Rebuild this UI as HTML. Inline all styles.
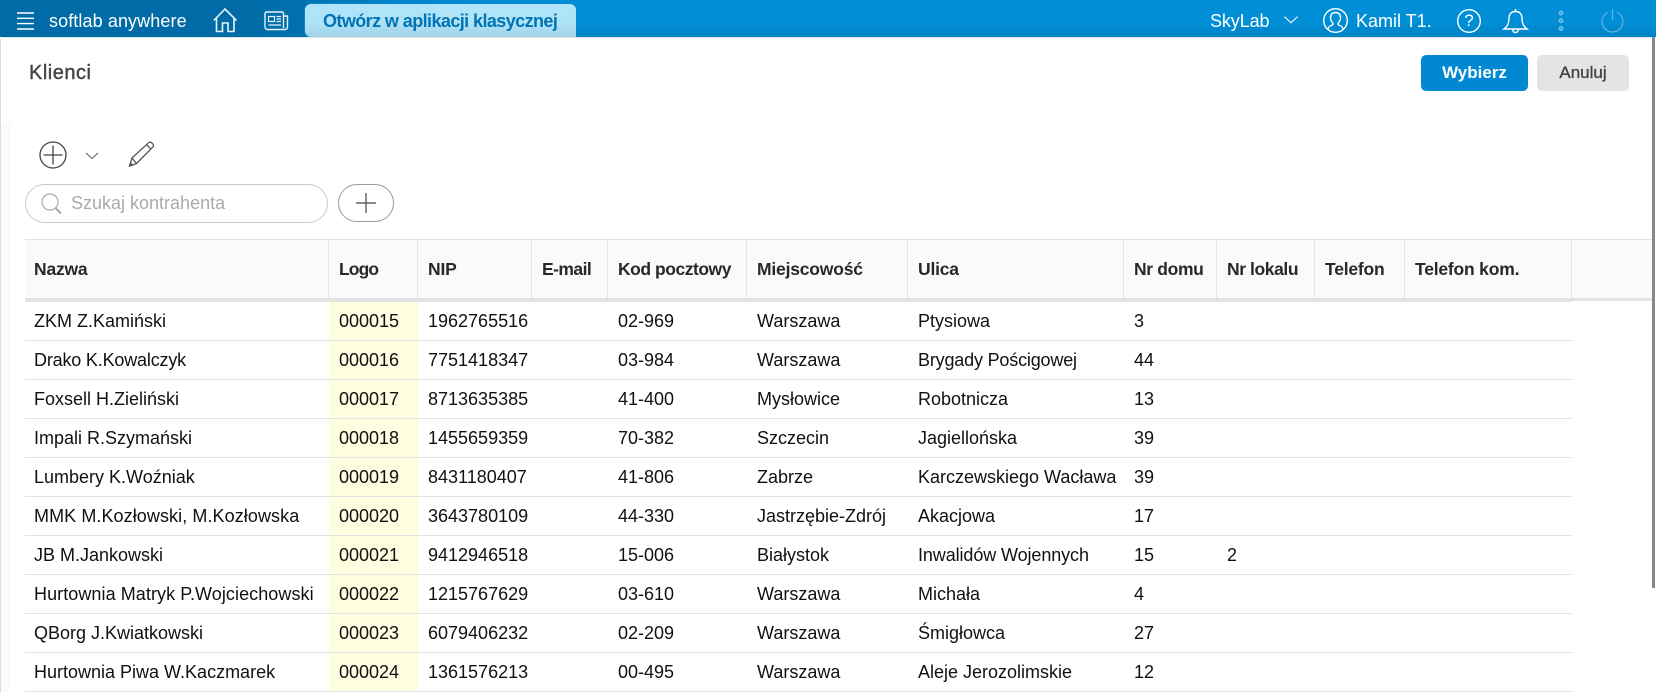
<!DOCTYPE html>
<html lang="pl"><head><meta charset="utf-8"><title>Klienci</title>
<style>
html,body{margin:0;padding:0;width:1656px;height:692px;overflow:hidden;background:#fff;font-family:"Liberation Sans",sans-serif;}
.a{position:absolute;white-space:nowrap}
#bar{left:0;top:0;width:1656px;height:37px;background:linear-gradient(90deg,#006ba6 0,#006ba6 235px,#0070ae 300px,rgba(0,125,195,.5) 400px,rgba(0,143,215,0) 520px),linear-gradient(180deg,#008fd6 0,#008fd6 22px,#0082c6 37px);}
#card{left:0;top:37px;width:1652px;height:655px;background:#fff;border-top:1px solid #e2e2e2;border-left:1px solid #dcdcdc;border-radius:4px 0 0 0;box-sizing:border-box}
#shade{left:1px;top:122px;width:30px;height:570px;background:#fbfbfb}
#panel{left:10px;top:122px;width:1642px;height:570px;background:#fff;border-radius:8px 0 0 0}
#tab{left:305px;top:4px;width:271px;height:33px;background:linear-gradient(180deg,#afe4fa 0,#aee2f7 60%,#a0d2e6 100%);border-radius:6px 6px 0 6px;box-shadow:0 -1px 0 #0a83c8,-1px 0 0 #0a83c8;color:#0274b4;font-size:18px;font-weight:bold;line-height:34px;padding-left:18px;box-sizing:border-box;letter-spacing:-.58px}
.w{color:#fff;font-size:18px;line-height:24px}
.btn{top:55px;height:36px;line-height:36px;text-align:center;font-size:17px;font-weight:bold;border-radius:5px}
table{position:absolute;left:25px;top:239px;border-collapse:separate;border-spacing:0;table-layout:fixed;width:1547px}
th{height:58px;padding:0 0 0 10px;box-sizing:content-box;background:#fafafa;border-top:1px solid #e4e4e4;border-right:1px solid #e4e4e4;border-bottom:4px solid #e3e3e3;text-align:left;font-size:17.5px;font-weight:bold;color:#26282c;white-space:nowrap;overflow:hidden;letter-spacing:-.2px}
td{height:38px;padding:0 0 0 10px;border-bottom:1px solid #e3e3e3;font-size:18px;color:#111;white-space:nowrap;overflow:hidden}
th:first-child,td:first-child{padding-left:9px}
td.y{background:#fdfde0}
svg{position:absolute;overflow:visible;fill:none}
</style></head><body>
<div class="a" id="bar"></div>
<div class="a" id="card"></div>
<div class="a" id="shade"></div>
<div class="a" id="panel"></div>

<svg style="left:17px;top:12px" width="18" height="18" stroke="#fff" stroke-width="1.4"><path d="M0 1h17M0 6.300h17M0 11.600h17M0 17h17"/></svg>
<div class="a w" style="left:49px;top:9px;font-size:18px;letter-spacing:.1px">softlab anywhere</div>
<svg style="left:213px;top:8px" width="25" height="25" stroke="#e8f3f9" stroke-width="1.6"><path d="M0.8 12.500 12 1l11.500 11.500M3.500 10.500V23.500h6V15h5.500v8.500h6V10.500"/></svg>
<svg style="left:264px;top:11px" width="25" height="20" stroke="#e8f3f9" stroke-width="1.4"><path d="M19.500 17V2.500a1.500 1.500 0 0 0-1.500-1.500H2.500A1.500 1.500 0 0 0 1 2.500v13.500a2.500 2.500 0 0 0 2.500 2.500H21a2.500 2.500 0 0 0 2.500-2.500V5h-4"/><path d="M4.500 5.500h6v5h-6zM12.500 5.500h4.500M12.500 8h4.500M12.500 10.500h4.500M4.500 14h12.500" stroke-width="1.200"/></svg>
<div class="a" id="tab">Otwórz w aplikacji klasycznej</div>

<div class="a w" style="left:1210px;top:9px;letter-spacing:-.1px">SkyLab</div>
<svg style="left:1284px;top:16px" width="14" height="8" stroke="#fff" stroke-width="1.1"><path d="M.5.700 7 6.800 13.500.700"/></svg>
<svg style="left:1323px;top:8px" width="25" height="25" stroke="#fff" stroke-width="1.4"><circle cx="12.500" cy="12.500" r="11.800"/><path d="M5 22c0-3 1.500-4.200 4.500-5 .6-.5.6-1.500.2-2-1.400-1.500-2.200-3.500-2.200-5.500 0-3 2-5 5-5s5 2 5 5c0 2-.8 4-2.200 5.500-.4.500-.4 1.500.2 2 3 .8 4.500 2 4.500 5"/></svg>
<div class="a w" style="left:1356px;top:9px">Kamil T1.</div>
<svg style="left:1457px;top:9px" width="24" height="24" stroke="#fff" stroke-width="1.4"><circle cx="12" cy="12" r="11.300"/></svg>
<div class="a" style="left:1457px;top:9px;width:24px;text-align:center;color:#fff;font-size:17px;line-height:24px">?</div>
<svg style="left:1503px;top:8px" width="26" height="26" stroke="#fff" stroke-width="1.4"><path d="M12.500 3.500V1M12.500 3.500c-4.500 0-6.500 3-6.500 7 0 5-1.500 8-5 10.500h23c-3.500-2.500-5-5.500-5-10.500 0-4-2-7-6.500-7zM9.500 21.500c.4 2 1.500 3 3 3s2.600-1 3-3"/></svg>
<svg style="left:1557px;top:9px" width="8" height="24" stroke="#79bee6" stroke-width="1.600"><circle cx="4" cy="4" r="1.600"/><circle cx="4" cy="11.700" r="1.600"/><circle cx="4" cy="19.500" r="1.600"/></svg>
<svg style="left:1601px;top:9px" width="23" height="23" stroke="#5cb0e2" stroke-width="1.300"><path d="M7 3.200a10.400 10.400 0 1 0 9 0M11.500 0v11"/></svg>

<div class="a" style="left:29px;top:61px;font-size:20px;line-height:25px;color:#444;letter-spacing:.5px;-webkit-text-stroke:.4px #444">Klienci</div>
<div class="a btn" style="left:1421px;width:107px;background:#0089d2;color:#fff">Wybierz</div>
<div class="a btn" style="left:1537px;width:92px;background:#e4e4e4;color:#444;font-weight:normal;-webkit-text-stroke:.35px #444">Anuluj</div>

<svg style="left:39px;top:141px" width="28" height="28" stroke="#444" stroke-width="1.300"><circle cx="14" cy="14" r="13"/><path d="M14 4.500v19M4.500 14h19"/></svg>
<svg style="left:85px;top:152px" width="14" height="8" stroke="#555" stroke-width="1"><path d="M1 1 7 6.500 13 1"/></svg>
<svg style="left:128px;top:141px" width="27" height="27" stroke="#555" stroke-width="1.300"><path d="M1.500 25 4 17 20.500 1.800c1-.9 2.200-.9 3.100 0l1.200 1.200c.9 1 .9 2.200 0 3.100L8.500 22.500zM4 17l4.500 5.500M18.500 3.700 23 8.300"/><path d="M1 25.800 5.500 24.500 2.500 21z" fill="#555" stroke="none"/></svg>

<div class="a" style="left:25px;top:184px;width:303px;height:39px;box-sizing:border-box;border:1px solid #c8c8c8;border-radius:20px"></div>
<svg style="left:41px;top:193px" width="22" height="22" stroke="#a9a9a9" stroke-width="1.200"><circle cx="9" cy="9" r="8"/><path d="M14.500 15l5.500 5.500" stroke-width="2"/></svg>
<div class="a" style="left:71px;top:191px;font-size:18px;line-height:25px;color:#aaa">Szukaj kontrahenta</div>
<div class="a" style="left:338px;top:184px;width:56px;height:38px;box-sizing:border-box;border:1px solid #9a9a9a;border-radius:19px"></div>
<svg style="left:356px;top:193px" width="20" height="20" stroke="#444" stroke-width="1.200"><path d="M10 0v20M0 10h20"/></svg>

<div class="a" style="left:1572px;top:239px;width:80px;height:62px;box-sizing:border-box;background:#fafafa;border-top:1px solid #e4e4e4;border-bottom:3px solid #e3e3e3"></div>

<table>
<colgroup><col style="width:304px"><col style="width:89px"><col style="width:114px"><col style="width:76px"><col style="width:139px"><col style="width:161px"><col style="width:216px"><col style="width:93px"><col style="width:98px"><col style="width:90px"><col style="width:167px"></colgroup>
<thead><tr><th>Nazwa</th><th style="letter-spacing:-.9px">Logo</th><th>NIP</th><th style="letter-spacing:-.55px">E-mail</th><th style="letter-spacing:-.47px">Kod pocztowy</th><th>Miejscowość</th><th>Ulica</th><th style="letter-spacing:-.35px">Nr domu</th><th style="letter-spacing:-.42px">Nr lokalu</th><th>Telefon</th><th>Telefon kom.</th></tr></thead>
<tbody>
<tr><td>ZKM Z.Kamiński</td><td class="y">000015</td><td>1962765516</td><td></td><td>02-969</td><td>Warszawa</td><td>Ptysiowa</td><td>3</td><td></td><td></td><td></td></tr>
<tr><td style="letter-spacing:-.18px">Drako K.Kowalczyk</td><td class="y">000016</td><td>7751418347</td><td></td><td>03-984</td><td>Warszawa</td><td style="letter-spacing:-.18px">Brygady Pościgowej</td><td>44</td><td></td><td></td><td></td></tr>
<tr><td>Foxsell H.Zieliński</td><td class="y">000017</td><td>8713635385</td><td></td><td>41-400</td><td>Mysłowice</td><td>Robotnicza</td><td>13</td><td></td><td></td><td></td></tr>
<tr><td>Impali R.Szymański</td><td class="y">000018</td><td>1455659359</td><td></td><td>70-382</td><td>Szczecin</td><td>Jagiellońska</td><td>39</td><td></td><td></td><td></td></tr>
<tr><td>Lumbery K.Woźniak</td><td class="y">000019</td><td>8431180407</td><td></td><td>41-806</td><td>Zabrze</td><td>Karczewskiego Wacława</td><td>39</td><td></td><td></td><td></td></tr>
<tr><td style="letter-spacing:.08px">MMK M.Kozłowski, M.Kozłowska</td><td class="y">000020</td><td>3643780109</td><td></td><td>44-330</td><td>Jastrzębie-Zdrój</td><td>Akacjowa</td><td>17</td><td></td><td></td><td></td></tr>
<tr><td>JB M.Jankowski</td><td class="y">000021</td><td>9412946518</td><td></td><td>15-006</td><td>Białystok</td><td style="letter-spacing:-.1px">Inwalidów Wojennych</td><td>15</td><td>2</td><td></td><td></td></tr>
<tr><td style="letter-spacing:.07px">Hurtownia Matryk P.Wojciechowski</td><td class="y">000022</td><td>1215767629</td><td></td><td>03-610</td><td>Warszawa</td><td>Michała</td><td>4</td><td></td><td></td><td></td></tr>
<tr><td>QBorg J.Kwiatkowski</td><td class="y">000023</td><td>6079406232</td><td></td><td>02-209</td><td>Warszawa</td><td>Śmigłowca</td><td>27</td><td></td><td></td><td></td></tr>
<tr><td>Hurtownia Piwa W.Kaczmarek</td><td class="y">000024</td><td>1361576213</td><td></td><td>00-495</td><td>Warszawa</td><td>Aleje Jerozolimskie</td><td>12</td><td></td><td></td><td></td></tr>
</tbody></table>

<div class="a" style="left:1652px;top:37px;width:3px;height:551px;background:#888"></div>
</body></html>
